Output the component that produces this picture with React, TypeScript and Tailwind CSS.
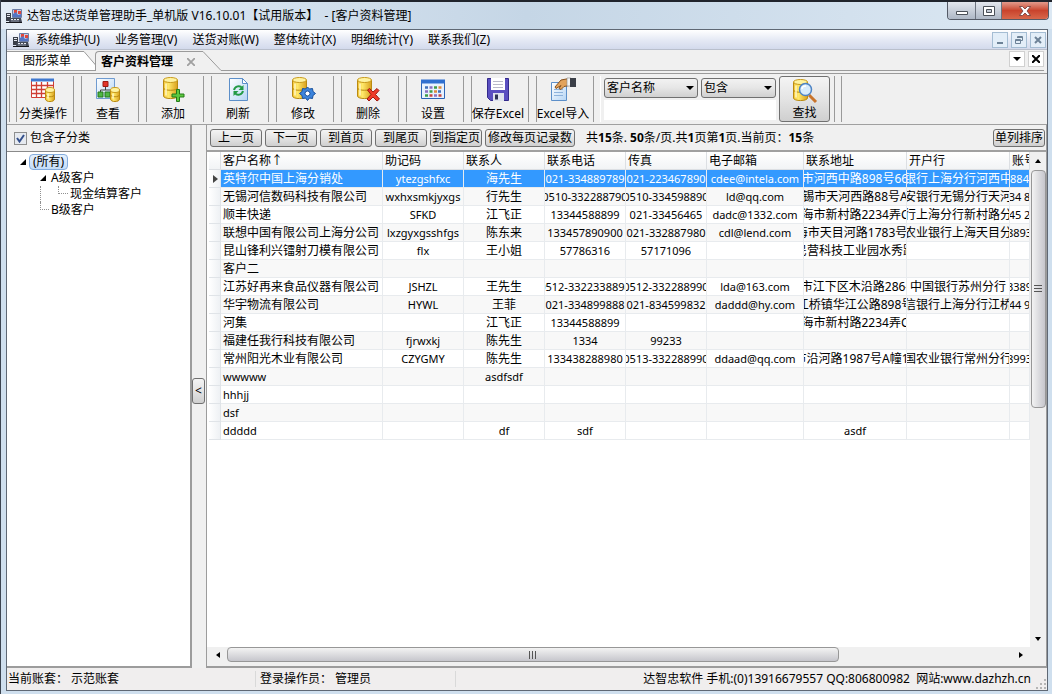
import clsx from "clsx";
import { ReactNode } from "react";

const MENUS = [
  "系统维护(U)",
  "业务管理(V)",
  "送货对账(W)",
  "整体统计(X)",
  "明细统计(Y)",
  "联系我们(Z)",
];

const PAGER = ["上一页", "下一页", "到首页", "到尾页", "到指定页"];

const COLUMNS = [
  { title: "客户名称↑", width: "w-[162px]" },
  { title: "助记码", width: "w-[81px]" },
  { title: "联系人", width: "w-[81px]" },
  { title: "联系电话", width: "w-[81px]" },
  { title: "传真", width: "w-[81px]" },
  { title: "电子邮箱", width: "w-[97px]" },
  { title: "联系地址", width: "w-[103px]" },
  { title: "开户行", width: "w-[103px]" },
  { title: "账号", width: "" },
];

const ROWS = [
  ["英特尔中国上海分销处", "ytezgshfxc", "海先生", "021-334889789", "021-223467890", "cdee@intela.com", "市河西中路898号66", "银行上海分行河西中", "884"],
  ["无锡河信数码科技有限公司", "wxhxsmkjyxgs", "行先生", "0510-332288790", "0510-334598890", "ld@qq.com", "锡市天河西路88号A", "安银行无锡分行天河", "34 8"],
  ["顺丰快递", "SFKD", "江飞正", "13344588899", "021-33456465", "dadc@1332.com", "海市新村路2234弄C", "行上海分行新村路分", "45 2"],
  ["联想中国有限公司上海分公司", "lxzgyxgsshfgs", "陈东来", "133457890900", "021-332887980", "cdl@lend.com", "海市天目河路1783号5", "农业银行上海天目分", "8893"],
  ["昆山锋利兴镭射刀模有限公司", "flx", "王小姐", "57786316", "57171096", "", "民营科技工业园水秀路", "", ""],
  ["客户二", "", "", "", "", "", "", "", ""],
  ["江苏好再来食品仪器有限公司", "JSHZL", "王先生", "0512-3322338898", "0512-332288990", "lda@163.com", "市江下区木沿路286-", "中国银行苏州分行", "3389"],
  ["华宇物流有限公司", "HYWL", "王菲", "021-334899888", "021-834599832", "daddd@hy.com", "江桥镇华江公路898号", "信银行上海分行江桥", "44 9"],
  ["河集", "", "江飞正", "13344588899", "", "", "海市新村路2234弄C", "", ""],
  ["福建任我行科技有限公司", "fjrwxkj", "陈先生", "1334", "99233", "", "", "", ""],
  ["常州阳光木业有限公司", "CZYGMY", "陈先生", "133438288980", "0513-332288990", "ddaad@qq.com", "市沿河路1987号A幢10", "国农业银行常州分行", "8993"],
  ["wwwww", "", "asdfsdf", "", "", "", "", "", ""],
  ["hhhjj", "", "", "", "", "", "", "", ""],
  ["dsf", "", "", "", "", "", "", "", ""],
  ["ddddd", "", "df", "sdf", "", "", "asdf", "", ""],
];

const hasChinese = (text: string) => /[\u4e00-\u9fff]/.test(text);

function AppIcon() {
  return (
    <svg className="h-4 w-4 shrink-0" viewBox="0 0 16 16">
      <path d="M6.500 1.500h9v8h-9z" fill="#c3cfe8" stroke="#6d7ea6" />
      <path d="M8 2h3v3H8zM12 3h3v3h-3z" fill="#e0473c" />
      <path d="M7 6l3-2 2 3 3-1v3H7z" fill="#5474c4" />
      <path d="M0 5h5v8H0z" fill="#3a3e48" />
      <path d="M1 6.500h3M1 8.500h3" stroke="#e6e9f0" />
      <path d="M4 10h11l1 4H3z" fill="#444a58" />
      <path d="M5 11.500h9" stroke="#e6e9f0" strokeDasharray="2 1" />
      <path d="M5 13h8" stroke="#a6aebe" strokeWidth=".8" />
      <path d="M0 14.500h16" stroke="#15171c" />
    </svg>
  );
}

function Cylinder({ x = 0, y = 0, w = 14, h = 20 }) {
  return (
    <g transform={`translate(${x} ${y})`}>
      <path
        d={`M.5 3v${h - 6}c0 3.400 ${w - 1} 3.400 ${w - 1} 0V3`}
        fill="url(#gold)"
        stroke="#b98a12"
      />
      <ellipse cx={w / 2} cy="3" rx={w / 2 - 0.5} ry="2.500" fill="#fff3a0" stroke="#c89a1c" />
      <path
        d={`M.5 ${h / 2}c0 3 ${w - 1} 3 ${w - 1} 0`}
        fill="none"
        stroke="#b98a12"
      />
      <path d={`M3 6.500v${h - 10}`} stroke="#fff7c4" strokeWidth="1.500" />
    </g>
  );
}

function ToolIcon({ children }: { children: ReactNode }) {
  return (
    <svg className="mt-[1px] h-[26px] w-[26px]" viewBox="0 0 26 26">
      <defs>
        <linearGradient id="gold">
          <stop offset="0" stopColor="#f3c53a" />
          <stop offset=".35" stopColor="#ffe96a" />
          <stop offset="1" stopColor="#d9a01c" />
        </linearGradient>
        <linearGradient id="sheet" x2="1" y2="1">
          <stop offset="0" stopColor="#ffffff" />
          <stop offset="1" stopColor="#b5d5f5" />
        </linearGradient>
      </defs>
      {children}
    </svg>
  );
}

const TOOLS = [
  {
    label: "分类操作",
    icon: (
      <>
        <path d="M1.500 2.500h22v18h-22z" fill="#fff" stroke="#cf3f35" />
        <path d="M1 1.500h23v3H1z" fill="#3f78cf" />
        <path d="M1 8.500h22M1 12.500h22M1 16.500h22M6.500 5v15M11.500 5v15M17.500 5v15" stroke="#cf3f35" strokeWidth="1.300" />
        <Cylinder x={15} y={10} w={10} h={15} />
      </>
    ),
  },
  {
    label: "查看",
    icon: (
      <>
        <path d="M1.500 1.500h18v20h-18z" fill="url(#sheet)" stroke="#6f9bd0" />
        <path d="M10.500 9v4M5.500 16v-3h10" fill="none" stroke="#444" />
        <path d="M8 4.500h5v5H8z" fill="#e2342b" stroke="#9b1c15" />
        <path d="M3 15h5v5H3zM10 15h5v5h-5z" fill="#4fb843" stroke="#27761f" />
        <Cylinder x={15} y={10} w={10} h={15} />
      </>
    ),
  },
  {
    label: "添加",
    icon: (
      <>
        <Cylinder x={3} y={0} w={15} h={22} />
        <path d="M16.500 12.500h3v4.500h4.500v3h-4.500v4.500h-3v-4.500H12v-3h4.500z" fill="#5cc93f" stroke="#247a18" />
      </>
    ),
  },
  {
    label: "刷新",
    icon: (
      <>
        <path d="M4.500 1.500h13l5 5v17h-18z" fill="url(#sheet)" stroke="#5c8fc9" />
        <path d="M17.500 1.500v5h5z" fill="#fff" stroke="#5c8fc9" />
        <path d="M9 13c1-4 6-5 8-2M18 14c-1 4-6 5-8 2" fill="none" stroke="#239a45" strokeWidth="2" />
        <path d="M18.500 8v5h-5zM8.500 19v-5h5z" fill="#239a45" />
      </>
    ),
  },
  {
    label: "修改",
    icon: (
      <>
        <Cylinder x={2} y={0} w={15} h={22} />
        <path d="M17.500 10l2 2 3-.5.5 3 2.500 2-2.500 2-.5 3-3-.5-2 2.500-2-2.500-3 .5-.5-3-2.500-2 2.500-2 .5-3 3 .5z" fill="#3c84dc" stroke="#17509c" />
        <circle cx="17.500" cy="16.500" r="2.500" fill="#fff" stroke="#17509c" />
      </>
    ),
  },
  {
    label: "删除",
    icon: (
      <>
        <Cylinder x={2} y={0} w={15} h={22} />
        <path d="M12.500 13l2-1.500 3.500 3.500 4-3.500 2 2-3.500 4 4 4.500-2.500 2-4-4-4 4-2-2 4-4.500z" fill="#ef3b2a" stroke="#a31a10" />
      </>
    ),
  },
  {
    label: "设置",
    icon: (
      <>
        <path d="M1.500 3.500h23v18h-23z" fill="#e8f2ff" stroke="#2c63b5" />
        <path d="M1 2.500h24v4H1z" fill="#2f6fd0" />
        <path d="M5 10.500h3M18 14.500h3" stroke="#3e6fba" strokeWidth="2.500" />
        <path d="M9.500 10.500h3M5 14.500h3M14 18.500h3" stroke="#8b6fc0" strokeWidth="2.500" />
        <path d="M14 10.500h3M9.500 14.500h3M5 18.500h3" stroke="#3f9c49" strokeWidth="2.500" />
        <path d="M18.500 10.500h3M14 14.500h3" stroke="#e08a3c" strokeWidth="2.500" />
        <path d="M9.500 18.500h3M18.500 18.500h3" stroke="#c9453a" strokeWidth="2.500" />
      </>
    ),
  },
  {
    label: "保存Excel",
    icon: (
      <>
        <path d="M2.500 1.500h21v22h-18l-3-3z" fill="#5a4fc0" stroke="#342a8c" />
        <path d="M6 1h14v12H6z" fill="#fff" />
        <path d="M8 4.500h10M8 7.500h10M8 10.500h10" stroke="#b9b9c9" />
        <path d="M8 16h11v8H8z" fill="#dfe3ee" />
        <path d="M10 17.500h3v5h-3z" fill="#2d3353" />
      </>
    ),
  },
  {
    label: "Excel导入",
    icon: (
      <>
        <path d="M1.500 5.500h15v18h-15z" fill="url(#sheet)" stroke="#5c8fc9" />
        <path d="M4 12.500h9M4 15.500h9M4 18.500h9" stroke="#8db2dc" />
        <path d="M5 10l6-7 8-1.500v7l-5 1-3 3-2-1 2-3-5 3z" fill="#e2a35c" stroke="#86501c" />
        <path d="M17 1h4v8h-4z" fill="#f4f4f4" stroke="#888" strokeWidth=".6" />
        <path d="M20 1h6v9h-6z" fill="#3b3f48" />
      </>
    ),
  },
];

function Arrow({ d, className = "" }: { d: string; className?: string }) {
  return (
    <svg className={clsx("pointer-events-none h-2 w-2 shrink-0", className)} viewBox="0 0 8 8">
      <path d={d} fill="currentColor" />
    </svg>
  );
}

function Button({ className = "", children }: { className?: string; children: ReactNode }) {
  return (
    <button
      type="button"
      className={clsx(
        "rounded-[3px] border border-[#707070] bg-linear-to-b from-[#f4f4f4] via-[#e4e4e4] to-[#cfcfcf] whitespace-nowrap",
        className
      )}
    >
      {children}
    </button>
  );
}

function Dropdown({ label, options, className }: { label: string; options: string[]; className: string }) {
  return (
    <div className={clsx("flex items-center", className)}>
      <select
        aria-label={label}
        className="h-5 w-full appearance-none rounded-[3px] border border-[#707070] bg-linear-to-b from-[#f2f2f2] via-[#e6e6e6] to-[#d0d0d0] px-[2px] leading-4"
      >
        {options.map((option) => (
          <option key={option}>{option}</option>
        ))}
      </select>
      <Arrow d="M0 2h8L4 6z" className="-ml-3" />
    </div>
  );
}

function TitleBar() {
  return (
    <header className="flex h-[29px] items-start border-t-2 border-[#20242c] bg-linear-to-r from-[#e4edf6] via-[#c5d6e6] to-[#dce8f3] pr-[3px] pl-[5px]">
      <div className="flex h-[27px] flex-1 items-center gap-[5px]">
        <AppIcon />
        <h1 className="whitespace-pre">
          达智忠送货单管理助手_单机版 V16.10.01【试用版本】  - [客户资料管理]
        </h1>
      </div>
      <div className="flex h-[18px] overflow-hidden rounded-b border border-t-0 border-[#545a66] text-[#4a5058]">
        <button type="button" aria-label="最小化" className="flex w-7 items-center justify-center border-r border-[#6d7480] bg-linear-to-b from-[#e3e7ee] to-[#aeb8c6]">
          <svg className="h-3 w-3" viewBox="0 0 12 12">
            <path d="M.5 6.500h11v3H.5z" fill="#fff" stroke="currentColor" />
          </svg>
        </button>
        <button type="button" aria-label="最大化" className="flex w-[26px] items-center justify-center border-r border-[#6d7480] bg-linear-to-b from-[#e3e7ee] to-[#aeb8c6]">
          <svg className="h-3 w-3" viewBox="0 0 12 12">
            <path d="M.5 1.500h11v9H.5z" fill="#fff" stroke="currentColor" />
            <path d="M3.500 4.500h5v3h-5z" fill="#c3cad5" stroke="currentColor" />
          </svg>
        </button>
        <button type="button" aria-label="关闭" className="flex w-[46px] items-center justify-center bg-linear-to-b from-[#e29a8c] via-[#c9432c] to-[#d8674a]">
          <svg className="h-3 w-3" viewBox="0 0 12 12">
            <path d="M.5 1.500h3L6 4l2.500-2.500h3L8 6l3.500 4.500h-3L6 8l-2.500 2.500h-3L4 6z" fill="#fff" stroke="#6b3a38" strokeWidth=".8" />
          </svg>
        </button>
      </div>
    </header>
  );
}

function MenuBar() {
  const button = "flex h-4 w-4 items-center justify-center border border-[#a5bdd3] bg-[#e3eef8] text-[#6d8297]";
  return (
    <nav className="flex h-5 items-center border-b border-[#b9bfcc] bg-linear-to-b from-white via-[#e6eaf5] to-[#d3daec] pr-[1px] pl-[6px]">
      <AppIcon />
      <div className="ml-[7px] flex flex-1 gap-[15px]">
        {MENUS.map((menu) => (
          <button key={menu} type="button" className="whitespace-nowrap">
            {menu}
          </button>
        ))}
      </div>
      <div className="flex gap-[3px]">
        <button type="button" aria-label="最小化子窗口" className={button}>
          <svg className="h-2 w-2" viewBox="0 0 8 8">
            <path d="M1 6h6v2H1z" fill="currentColor" />
          </svg>
        </button>
        <button type="button" aria-label="还原子窗口" className={button}>
          <svg className="h-2 w-2" viewBox="0 0 8 8" fill="none" stroke="currentColor">
            <path d="M2.500 2V.5h5v4H6M.5 3.500h5v4h-5zM2 1.500h5M0 4.500h5" />
          </svg>
        </button>
        <button type="button" aria-label="关闭子窗口" className={button}>
          <svg className="h-2 w-2" viewBox="0 0 8 8">
            <path d="M1 1l6 6M7 1L1 7" stroke="currentColor" strokeWidth="2" />
          </svg>
        </button>
      </div>
    </nav>
  );
}

function TabStrip() {
  return (
    <div className="flex h-[24px] items-start border-b border-[#9a9a9a] bg-[#f0f0f0] pt-[1px] pr-[3px]">
      <div className="flex h-[20px] flex-1 items-start border-b border-[#9a9a9a]">
        <button type="button" className="h-[19px] border-t border-[#9a9a9a] bg-white pr-[9px] pl-4">
          图形菜单
        </button>
        <svg className="-mr-[1px] h-[19px] w-4 shrink-0" viewBox="0 0 16 19">
          <path d="M0 0h4l12 14v5H0z" fill="#fff" />
          <path d="M0 .5h4l12 14" fill="none" stroke="#9a9a9a" />
        </svg>
        <div className="flex h-5 items-center gap-2 rounded-tl border-t border-l border-[#9a9a9a] bg-[#f0f0f0] pl-[5px]">
          <button type="button" className="font-bold">
            客户资料管理
          </button>
          <button type="button" aria-label="关闭标签" className="flex h-4 w-5 items-center justify-center">
            <svg className="h-2 w-2" viewBox="0 0 8 8">
              <path d="M0 0l8 8M8 0L0 8" stroke="#a0a0a0" strokeWidth="1.800" />
            </svg>
          </button>
        </div>
        <svg className="h-5 w-5 shrink-0" viewBox="0 0 20 20">
          <path d="M0 0h2l18 19v1H0z" fill="#f0f0f0" />
          <path d="M0 .5h2l18 19" fill="none" stroke="#9a9a9a" />
        </svg>
        <div className="ml-auto flex gap-[3px]">
          <button type="button" aria-label="标签列表" className="flex h-4 w-4 items-center justify-center border border-[#d0d0d0] bg-white">
            <Arrow d="M0 2h8L4 6z" />
          </button>
          <button type="button" aria-label="关闭当前标签" className="flex h-4 w-4 items-center justify-center border border-[#d0d0d0] bg-white">
            <svg className="h-2 w-2" viewBox="0 0 8 8">
              <path d="M0 0l8 8M8 0L0 8" stroke="#000" strokeWidth="2" />
            </svg>
          </button>
        </div>
      </div>
    </div>
  );
}

function Toolbar() {
  return (
    <div className="flex h-[51px] border-b border-[#a0a0a0] bg-[#f0f0f0] py-[2px] pl-[2px]">
      <div className="w-[7px] border-l border-[#9a9a9a]" />
      <div className="flex gap-[7px]">
        {TOOLS.map(({ label, icon }) => (
          <button
            key={label}
            type="button"
            className="flex w-[58px] flex-col items-center justify-between border-x border-[#9a9a9a] pr-1 whitespace-nowrap"
          >
            <ToolIcon>{icon}</ToolIcon>
            <span className="leading-4">{label}</span>
          </button>
        ))}
      </div>
      <form className="ml-[6px] flex gap-[3px] border-l border-white pl-[3px]">
        <div className="flex w-[172px] flex-col gap-[2px] pt-[2px]">
          <div className="flex gap-[3px]">
            <Dropdown label="查找字段" options={["客户名称", "助记码", "联系人"]} className="w-[94px]" />
            <Dropdown label="查找方式" options={["包含", "等于"]} className="w-[75px]" />
          </div>
          <input aria-label="查找内容" type="text" className="h-5 w-full bg-white px-1" />
        </div>
        <Button className="flex w-[51px] flex-col items-center justify-between">
          <ToolIcon>
            <Cylinder x={1} y={1} w={15} h={22} />
            <path d="M17 17l7 7" stroke="#c9742b" strokeWidth="3" />
            <circle cx="13.500" cy="11.500" r="6" fill="#d8ecfc" stroke="#4d83c4" strokeWidth="1.500" />
            <path d="M10 11c0-2 2-3 4-3" fill="none" stroke="#fff" strokeWidth="1.500" />
          </ToolIcon>
          <span className="leading-4">查找</span>
        </Button>
      </form>
      <div className="ml-1 w-2 border-x border-[#9a9a9a]" />
    </div>
  );
}

function CategoryTree() {
  const expander = "M7 1v6H1z";
  return (
    <aside className="flex w-[185px] shrink-0 flex-col border-r-2 border-b-2 border-[#9c9c9c] bg-white">
      <label className="flex h-[27px] shrink-0 items-center gap-[3px] border-b border-[#8a8a8a] bg-[#f0f0f0] pl-[7px]">
        <input type="checkbox" defaultChecked className="peer sr-only" />
        <span className="flex h-[13px] w-[13px] items-center justify-center border border-[#8e8f8f] bg-[#e6eaf0]">
          <svg className="h-[9px] w-[9px]" viewBox="0 0 9 9">
            <path d="M1 4l2.500 3.500L8 1" fill="none" stroke="#34508c" strokeWidth="2" />
          </svg>
        </span>
        包含子分类
      </label>
      <ul className="pt-[2px] pl-3 leading-4">
        <li>
          <div className="flex items-center gap-[2px]">
            <Arrow d={expander} />
            <button type="button" className="rounded-sm border border-[#84acdd] bg-linear-to-b from-[#e4f0fd] to-[#c3dcf8] px-[3px] leading-[14px]">
              (所有)
            </button>
          </div>
          <ul className="pl-5">
            <li>
              <div className="flex items-center gap-1">
                <Arrow d={expander} />
                <button type="button">A级客户</button>
              </div>
              <ul className="ml-[1px] border-l border-dotted border-[#909090] pl-[17px]">
                <li className="flex">
                  <span className="mr-[2px] h-2 w-[10px] border-b border-l border-dotted border-[#909090]" />
                  <button type="button">现金结算客户</button>
                </li>
              </ul>
            </li>
            <li className="ml-[1px] flex">
              <span className="mr-[2px] h-2 w-[9px] border-b border-l border-dotted border-[#909090]" />
              <button type="button">B级客户</button>
            </li>
          </ul>
        </li>
      </ul>
    </aside>
  );
}

function CustomerGrid() {
  return (
    <div className="min-w-0 flex-1 overflow-hidden">
      <table className="w-full table-fixed border-separate border-spacing-0">
        <colgroup>
          <col className="w-3" />
          {COLUMNS.map(({ title, width }) => (
            <col key={title} className={width} />
          ))}
        </colgroup>
        <thead>
          <tr className="h-[18px] bg-linear-to-b from-white to-[#f1f3f5]">
            <th className="border-r border-b border-[#dcdfe3] p-0" aria-label="当前行" />
            {COLUMNS.map(({ title }) => (
              <th key={title} scope="col" className="overflow-hidden border-r border-b border-[#dcdfe3] p-0 pl-[2px] text-left leading-4 font-normal whitespace-nowrap">
                {title}
              </th>
            ))}
          </tr>
        </thead>
        <tbody>
          {ROWS.map((row, index) => (
            <tr
              key={row[0]}
              className={clsx(
                "h-[18px]",
                index === 0 ? "bg-[#3399ff] text-white" : index % 2 ? "bg-[#f8f8f8]" : "bg-white"
              )}
            >
              <td className="border-r border-b border-[#e0e4e8] bg-linear-to-r from-white to-[#eef1f4] p-0 text-[#444]">
                {index === 0 && <Arrow d="M2 0l5 4-5 4z" className="mx-auto" />}
              </td>
              {row.map((text, cell) => (
                <td key={cell} className="border-r border-b border-[#e8ebee] p-0">
                  <div
                    className={clsx(
                      "flex h-[17px] items-center overflow-hidden whitespace-pre",
                      cell === 0 ? "pl-[2px]" : "justify-center",
                      !hasChinese(text) && "text-[11px]"
                    )}
                  >
                    {text}
                  </div>
                </td>
              ))}
            </tr>
          ))}
        </tbody>
      </table>
    </div>
  );
}

function Grip({ vertical = false }) {
  return (
    <svg className="h-2 w-2" viewBox="0 0 8 8">
      <path
        d={vertical ? "M0 .5h8M0 3.500h8M0 6.500h8" : "M.5 0v8M3.500 0v8M6.500 0v8"}
        stroke="#555"
      />
    </svg>
  );
}

function CustomerPanel() {
  return (
    <section className="flex min-w-0 flex-1 flex-col border-r border-b-2 border-l border-[#9c9c9c] bg-white">
      <div className="flex h-[27px] shrink-0 items-center gap-[3px] border-b-2 border-[#a0a0a0] bg-[#f0f0f0] pr-[1px] pl-[3px]">
        {PAGER.map((label) => (
          <Button key={label} className="h-[18px] w-[52px] leading-4">
            {label}
          </Button>
        ))}
        <Button className="h-[18px] w-[90px] leading-4">修改每页记录数</Button>
        <p className="ml-2 flex-1 whitespace-nowrap">
          共<b>15</b>条. <b>50</b>条/页.共<b>1</b>页第<b>1</b>页.当前页：<b>15</b>条
        </p>
        <Button className="h-[18px] w-[52px] leading-4">单列排序</Button>
      </div>
      <div className="flex flex-1 pl-[2px]">
        <CustomerGrid />
        <div className="flex w-4 flex-col items-center bg-[#f0f0f0]">
          <div className="flex h-[18px] items-center">
            <Arrow d="M1 6h6L4 2z" />
          </div>
          <div className="flex h-[48%] w-[15px] items-center justify-center rounded-sm border border-[#979797] bg-linear-to-r from-[#f3f3f3] to-[#c6c6cc]">
            <Grip vertical />
          </div>
          <div className="mt-auto flex h-4 items-center">
            <Arrow d="M1 2h6L4 6z" />
          </div>
        </div>
      </div>
      <div className="flex h-[19px] shrink-0 items-start bg-[#f0f0f0] pr-4 pl-[2px]">
        <div className="flex h-[15px] w-[18px] items-center justify-center">
          <Arrow d="M6 1v6L2 4z" />
        </div>
        <div className="flex-1">
          <div className="flex h-[15px] w-[78%] items-center justify-center rounded-sm border border-[#979797] bg-linear-to-b from-[#f3f3f3] to-[#c6c6cc]">
            <Grip />
          </div>
        </div>
        <div className="flex h-[15px] w-[18px] items-center justify-center">
          <Arrow d="M2 1v6l4-3z" />
        </div>
      </div>
    </section>
  );
}

function StatusBar() {
  return (
    <footer className="flex h-[22px] items-center bg-[#f0eeee] pl-[1px] whitespace-pre">
      <span className="w-[248px] border-r border-[#d9d9d9]">当前账套： 示范账套</span>
      <span className="w-[200px] border-r border-[#d9d9d9] pl-1">登录操作员： 管理员</span>
      <span className="ml-auto">
        达智忠软件 手机:(0)13916679557 QQ:806800982  网站:www.dazhzh.cn
      </span>
      <svg className="ml-1 h-3 w-3 self-end" viewBox="0 0 12 12" fill="#b5b5b5">
        <path d="M9 1h2v2H9zM9 5h2v2H9zM9 9h2v2H9zM5 5h2v2H5zM5 9h2v2H5zM1 9h2v2H1z" />
      </svg>
    </footer>
  );
}

export default function App() {
  return (
    <div className="flex min-h-screen flex-col overflow-hidden border-l border-[#3c4450] bg-[#cfdfee] font-['Noto_Sans','Noto_Sans_CJK_SC',sans-serif] text-xs leading-4 text-black">
      <TitleBar />
      <div className="mr-1 mb-[3px] ml-[5px] flex flex-1 flex-col border border-[#5f6874] bg-[#f0f0f0]">
        <MenuBar />
        <TabStrip />
        <Toolbar />
        <main className="flex flex-1">
          <CategoryTree />
          <div className="flex w-[14px] shrink-0 items-center pb-3">
            <Button className="h-[26px] w-[13px] text-center">&lt;</Button>
          </div>
          <CustomerPanel />
        </main>
        <StatusBar />
      </div>
    </div>
  );
}
